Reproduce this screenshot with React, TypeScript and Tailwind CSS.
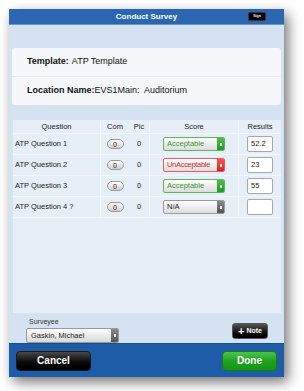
const questions = [
  { name: 'ATP Question 1', score: 'Acceptable', tone: 'good', result: '52.2' },
  { name: 'ATP Question 2', score: 'UnAcceptable', tone: 'bad', result: '23' },
  { name: 'ATP Question 3', score: 'Acceptable', tone: 'good', result: '55' },
  { name: 'ATP Question 4 ?', score: 'N/A', tone: 'none', result: '' },
];

const cols = 'grid grid-cols-[88px_28px_21px_89px_42px]';

function ScoreSelect({ label, tone }: { label: string; tone: string }) {
  const box =
    tone === 'good'
      ? 'border-[#5fb35f] text-[#2f9a2f]'
      : tone === 'bad'
      ? 'border-[#e06060] text-[#d62a2a] tracking-[-0.3px]'
      : 'border-[#9a9a9a] text-[#222]';
  const side =
    tone === 'good'
      ? 'bg-gradient-to-b from-[#49c049] to-[#1f9a1f]'
      : tone === 'bad'
      ? 'bg-gradient-to-b from-[#ff5050] to-[#e01818]'
      : 'bg-gradient-to-b from-[#8a8a8a] to-[#555]';
  return (
    <div
      className={`flex h-[14px] w-[62px] overflow-hidden rounded-[2px] border bg-gradient-to-b from-white to-[#dcdcdc] ${box}`}
    >
      <span className="flex flex-1 items-center overflow-hidden whitespace-nowrap pl-[3px] text-[7.5px] leading-none">
        {label}
      </span>
      <span className={`flex w-[7px] shrink-0 items-center justify-center ${side}`}>
        <span className="h-[3px] w-[2px] bg-white" />
      </span>
    </div>
  );
}

export default function App() {
  return (
    <div className="h-[391px] w-[304px] bg-white pl-[9px] pt-[9px] font-['Liberation_Sans',Arial,sans-serif]">
      <div className="flex h-[368px] w-[275px] flex-col bg-[#d5e2f1] shadow-[4px_5px_12px_rgba(0,0,0,0.55)]">
        {/* Title bar */}
        <div className="grid h-[15px] grid-cols-[1fr_auto_1fr] items-center bg-[#2b66b1]">
          <span />
          <span className="text-[8px] font-bold text-white">Conduct Survey</span>
          <div className="flex justify-end pr-[18px]">
            <span className="flex h-[9px] w-[18px] items-center justify-center rounded-[2px] border border-[#333] bg-black text-[3.5px] font-bold text-white">
              Sign
            </span>
          </div>
        </div>
        <div className="h-px bg-[#6b94cc]" />

        {/* Template / location */}
        <div className="mx-[3px] mt-[23px] flex h-[57px] flex-col rounded-[3px] bg-[#f6f7fb] text-[9px] text-[#111]">
          <div className="flex flex-1 items-center border-b border-[#e2e6ee] pl-[15px]">
            <span className="font-bold">Template:</span>
            <span className="ml-[3px]">ATP Template</span>
          </div>
          <div className="flex flex-1 items-center pl-[15px]">
            <span className="font-bold">Location Name:</span>
            <span>EVS1Main:&nbsp; Auditorium</span>
          </div>
        </div>

        {/* Question table */}
        <div className="ml-[4px] mr-[3px] mt-[15px] flex h-[193px] flex-col bg-[#e6eef8] text-[7.5px] text-[#222]">
          <div className={`${cols} h-[14px] items-center border-b border-[#f3f6fb] text-center`}>
            <span className="border-r border-[#f3f6fb]">Question</span>
            <span>Com</span>
            <span className="border-r border-[#f3f6fb]">Pic</span>
            <span className="border-r border-[#f3f6fb]">Score</span>
            <span>Results</span>
          </div>
          {questions.map((q) => (
            <div key={q.name} className={`${cols} h-[21px] border-b border-[#f3f6fb]`}>
              <span className="flex items-center whitespace-nowrap border-r border-[#f3f6fb] pl-[2px]">{q.name}</span>
              <span className="flex items-center justify-center">
                <span className="flex h-[10px] w-[17px] items-center justify-center rounded-full border border-[#9a9a9a] bg-gradient-to-b from-white to-[#cfcfcf] text-[7px] leading-none">
                  0
                </span>
              </span>
              <span className="flex items-center justify-center border-r border-[#f3f6fb]">0</span>
              <span className="flex items-center justify-center border-r border-[#f3f6fb]">
                <ScoreSelect label={q.score} tone={q.tone} />
              </span>
              <span className="flex items-center justify-center">
                <span className="flex h-[16px] w-[26px] items-center rounded-[2px] border border-[#a8a8a8] bg-white pl-[3px] text-[7.5px]">
                  {q.result}
                </span>
              </span>
            </div>
          ))}
        </div>

        {/* Surveyee + note */}
        <div className="flex h-[30px] items-end justify-between pl-[17px] pr-[16px]">
          <div className="flex flex-col">
            <span className="pl-[3px] text-[7px] leading-none text-[#333]">Surveyee</span>
            <div className="mt-[3px] flex h-[15px] w-[93px] overflow-hidden rounded-[2px] border border-[#9a9a9a] bg-gradient-to-b from-white to-[#d8d8d8]">
              <span className="flex flex-1 items-center pl-[4px] text-[7.5px] text-[#222]">Gaskin, Michael</span>
              <span className="flex w-[7px] items-center justify-center bg-gradient-to-b from-[#8a8a8a] to-[#555]">
                <span className="h-[3px] w-[2px] bg-white" />
              </span>
            </div>
          </div>
          <div className="mb-[4px] flex h-[16px] w-[36px] items-center justify-center gap-[2px] rounded-[3px] border border-[#555] bg-gradient-to-b from-[#555] to-black text-[7px] font-bold text-white">
            <span className="text-[11px] leading-none">+</span>
            <span>Note</span>
          </div>
        </div>

        {/* Bottom bar */}
        <div className="flex h-[34px] items-center justify-between border-t border-[#174e8f] bg-[#1e5ca7] px-[7px]">
          <div className="flex h-[20px] w-[75px] items-center justify-center rounded-[4px] border border-[#1a1a1a] bg-gradient-to-b from-[#4a4a4a] via-[#111] to-black text-[10px] font-bold text-white">
            Cancel
          </div>
          <div className="flex h-[20px] w-[55px] items-center justify-center rounded-[4px] border border-[#1a7a1a] bg-gradient-to-b from-[#48c548] via-[#1fa31f] to-[#149614] text-[10px] font-bold text-white">
            Done
          </div>
        </div>
      </div>
    </div>
  );
}
